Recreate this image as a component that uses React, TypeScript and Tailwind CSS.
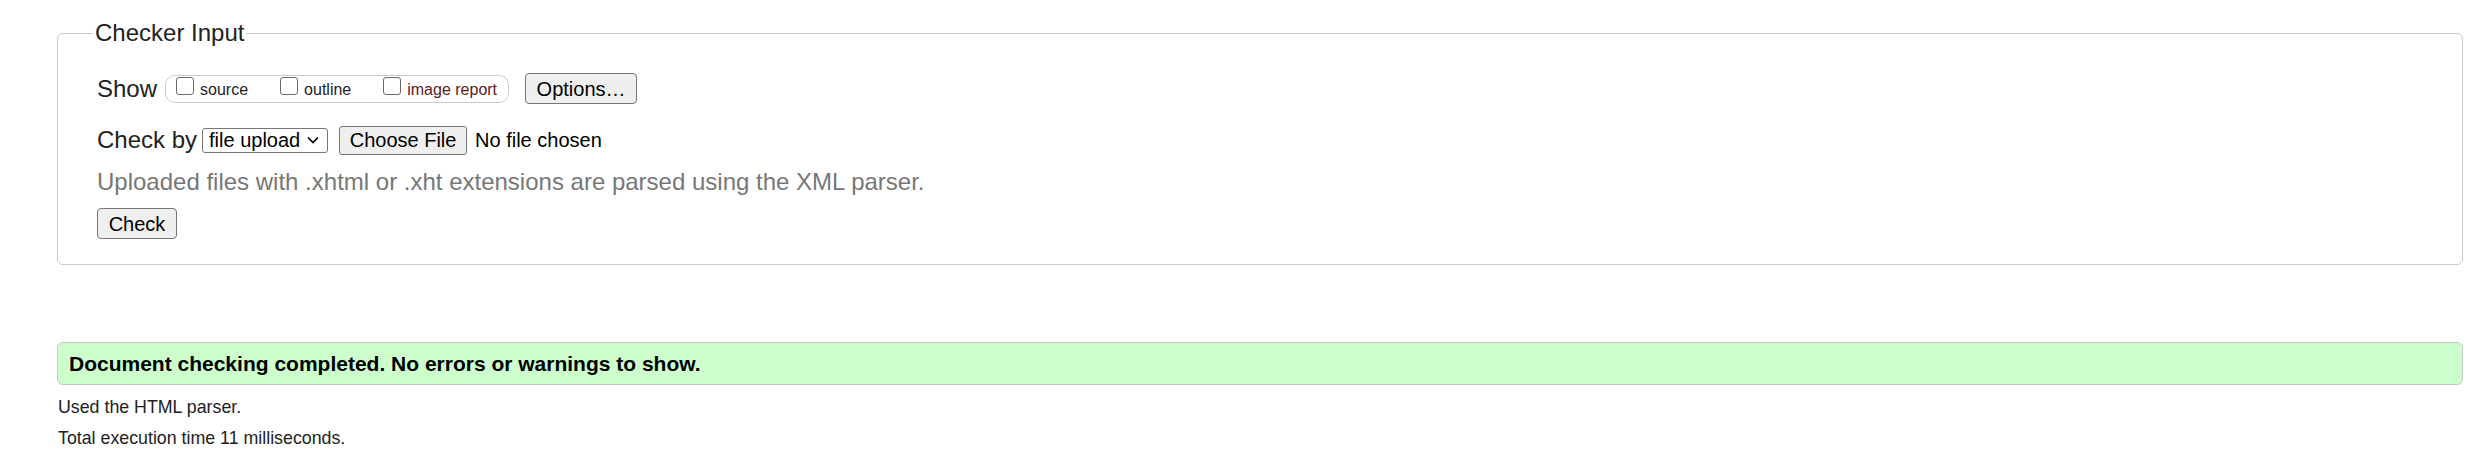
export default function App() {
    return (
        <div className="min-h-[459px] bg-white font-['Liberation_Sans',Arial,sans-serif] text-[#222]">
            <div className="pt-[19px] pl-[57px] pr-[7px]">
                <fieldset className="border border-[#cccccc] rounded-[6px] pl-[39px] pr-4 pb-[25px]">
                    <legend className="ml-[-4px] px-[2px] text-[24px] leading-[28px] text-[#222]">Checker Input</legend>

                    <div className="mt-[26px] flex items-center h-[31px]">
                        <span className="text-[24px] leading-[28px]">Show</span>
                        <div className="ml-[8px] flex items-center h-[28px] border border-[#cccccc] rounded-[10px] pl-[10px] pr-[11px] gap-[32px]">
                            <label className="flex items-center">
                                <span className="w-[18px] h-[18px] mb-[6px] border border-[#6b6b6b] rounded-[3px] bg-white"></span>
                                <span className="ml-[6px] pt-[3px] text-[16px] leading-[18px] text-[#1d1d2b]">source</span>
                            </label>
                            <label className="flex items-center">
                                <span className="w-[18px] h-[18px] mb-[6px] border border-[#6b6b6b] rounded-[3px] bg-white"></span>
                                <span className="ml-[6px] pt-[3px] text-[16px] leading-[18px] text-[#1d1d2b]">outline</span>
                            </label>
                            <label className="flex items-center">
                                <span className="w-[18px] h-[18px] mb-[6px] border border-[#6b6b6b] rounded-[3px] bg-white"></span>
                                <span className="ml-[6px] pt-[3px] text-[16px] leading-[18px] text-[#5c1a1a]">image report</span>
                            </label>
                        </div>
                        <button type="button" className="ml-[16px] h-[31px] w-[112px] border border-[#767676] rounded-[4px] bg-[#efefef] text-[20px] leading-[24px] text-black">
                            Options…
                        </button>
                    </div>

                    <div className="mt-[21px] flex items-center h-[30px]">
                        <span className="text-[24px] leading-[28px]">Check by</span>
                        <div className="ml-[5px] flex items-center h-[25px] w-[126px] border border-[#767676] rounded-[3px] bg-white pl-[6px] pr-[8px]">
                            <span className="text-[20px] leading-[22px] text-black">file upload</span>
                            <svg className="ml-auto" width="12" height="8" viewBox="0 0 12 8" fill="none">
                                <path d="M1 1.5 L6 6.5 L11 1.5" stroke="#000" strokeWidth="1.6" />
                            </svg>
                        </div>
                        <button type="button" className="ml-[11px] h-[29px] w-[128px] border border-[#767676] rounded-[3px] bg-[#efefef] text-[20px] leading-[24px] text-black">
                            Choose File
                        </button>
                        <span className="ml-[8px] text-[20px] leading-[24px] text-black">No file chosen</span>
                    </div>

                    <p className="mt-[13px] text-[24px] leading-[28px] text-[#777777]">
                        Uploaded files with .xhtml or .xht extensions are parsed using the XML parser.
                    </p>

                    <div className="mt-[12px]">
                        <button type="submit" className="h-[31px] w-[80px] border border-[#767676] rounded-[4px] bg-[#efefef] text-[20px] leading-[24px] text-black">
                            Check
                        </button>
                    </div>
                </fieldset>

                <div className="mt-[77px] h-[43px] flex items-center border border-[#c6c6c6] rounded-[6px] bg-[#ccffcc] pl-[11px]">
                    <span className="text-[21px] leading-[24px] font-bold text-black">
                        Document checking completed. No errors or warnings to show.
                    </span>
                </div>

                <p className="mt-[12px] pl-px text-[17.8px] leading-[20px] text-[#222]">Used the HTML parser.</p>
                <p className="mt-[11px] pl-px text-[17.8px] leading-[20px] text-[#222]">Total execution time 11 milliseconds.</p>
            </div>
        </div>
    );
}
